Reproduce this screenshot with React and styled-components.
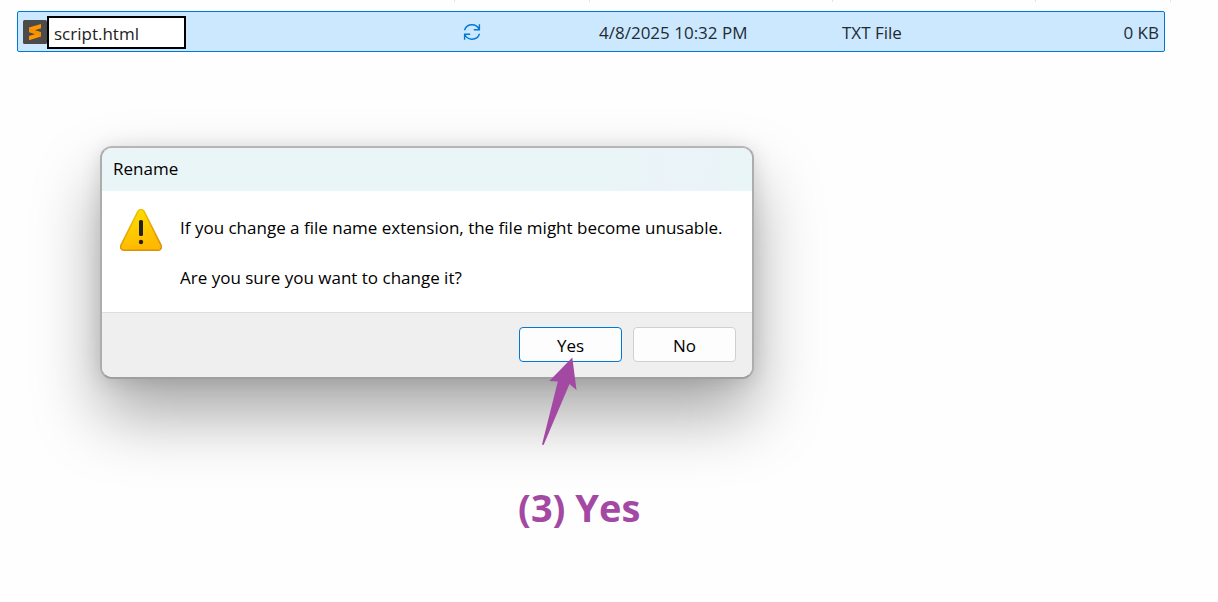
import React from "react";
import styled, { createGlobalStyle } from "styled-components";

const GlobalStyle = createGlobalStyle`
  * { box-sizing: border-box; }
  body {
    margin: 0;
    background: #fefefe;
    color: #000;
    font: 17px/24px "Open Sans", "Noto Sans", sans-serif;
  }
`;

const FileTable = styled.table`
  display: block;
  margin: 0 47px 0 17px;
  color: #222b33;

  thead, tbody { display: block; }
`;

const Columns = styled.tr`
  display: grid;
  grid-template-columns: minmax(200px, 1fr) 135px 243px 203px 135px;
`;

const HeaderRow = styled(Columns)`
  height: 2px;
  margin-bottom: 9px;
`;

const HeaderCell = styled.th`
  padding: 0;
  border-right: 1px solid #e3e3e3;
`;

const FileRow = styled(Columns)`
  grid-template-columns: minmax(200px, 1fr) 135px 243px 203px 130px;
  align-items: center;
  height: 41px;
  margin-right: 6px;
  border: 1px solid #0078d4;
  border-radius: 2px;
  background: #cce8ff;
`;

const Cell = styled.td`
  display: flex;
  align-items: center;
  justify-content: ${({ $end }) => ($end ? "flex-end" : "flex-start")};
  padding: 2px ${({ $end }) => ($end ? "5px" : "0")} 0 11px;
  white-space: nowrap;
`;

const NameCell = styled(Cell)`
  padding: 1px 0 0 5px;
`;

const StatusCell = styled(Cell)`
  padding: 0 0 0 10px;
`;

const NameInput = styled.input`
  width: 139px;
  height: 33px;
  padding: 2px 5px 0;
  border: 2px solid #000;
  outline: 0;
  background: #fff;
  color: #222;
  font: inherit;
`;

const Dialog = styled.section`
  width: 654px;
  max-width: calc(100% - 116px);
  margin: 94px 0 0 100px;
  overflow: hidden;
  border: 2px solid;
  border-color: #b6b6b6 #adadad #9f9f9f;
  border-radius: 12px;
  background: #fff;
  box-shadow: 0 36px 66px rgba(0, 0, 0, 0.34), 0 2px 20px rgba(0, 0, 0, 0.12);
`;

const DialogTitle = styled.h1`
  margin: 0;
  padding: 9px 11px 10px;
  background: linear-gradient(100deg, #eaf5f7 75%, #eaf4f9 90%, #eaf5f7);
  font-size: 17px;
  font-weight: 400;
`;

const DialogBody = styled.div`
  display: flex;
  gap: 18px;
  padding: 18px 18px 22px;

  > svg { flex: none; }
`;

const Message = styled.div`
  padding-top: 7px;

  p { margin: 0 0 26px; }
  p:last-child { margin: 0; }
`;

const DialogActions = styled.footer`
  display: flex;
  justify-content: flex-end;
  gap: 11px;
  padding: 14px 16px 15px;
  border-top: 1px solid #dfdfdf;
  background: #efefef;
`;

const Button = styled.button`
  width: 103px;
  height: 35px;
  padding: 2px 0 0;
  border: 1px solid ${({ $primary }) => ($primary ? "#0078d4" : "#d0d0d0")};
  border-radius: 4px;
  background: #fdfdfd;
  color: #000;
  font: inherit;
`;

const Annotation = styled.div`
  position: relative;
  margin: -22px 0 0 518px;
  color: #a349a4;
`;

const Arrow = styled.svg`
  display: block;
  margin-left: 23px;
`;

const Caption = styled.p`
  margin: 34px 0 0;
  font-size: 38px;
  font-weight: 700;
  line-height: 54px;
`;

const SublimeIcon = () => (
  <svg width="24" height="24" viewBox="0 0 24 24" aria-hidden="true">
    <rect width="24" height="24" rx="1.5" fill="#4b4b4b" />
    <path d="M6 7.6 18 4v4.2l-6.4 2 6.4 2v4.2L6 20.2V16l6.6-2L6 12z" fill="#ff9800" />
    <path d="M6 7.8v4.1l12 4.4v-4.1l-6.4-2z" fill="#f79000" />
  </svg>
);

const SyncIcon = () => (
  <svg width="18" height="18" viewBox="0 0 18 18" fill="none" stroke="#0078d4" strokeWidth="1.4" role="img" aria-label="Sync pending">
    <path d="M1.5 7.2C2.6 3.8 5.4 1.8 9 1.8c3.2 0 5.8 1.7 7.3 4.7M16.4 1.2v5.5h-5.6" />
    <path d="M16.5 10.8c-1.1 3.4-3.9 5.4-7.5 5.4-3.2 0-5.8-1.7-7.3-4.7M1.6 16.8v-5.5h5.6" />
  </svg>
);

const WarningIcon = () => (
  <svg width="42" height="42" viewBox="0 0 42 42" role="img" aria-label="Warning">
    <defs>
      <linearGradient id="warn-fill" x1="0" y1="0" x2="0.3" y2="1">
        <stop offset="0" stopColor="#ffe200" />
        <stop offset="1" stopColor="#ffb900" />
      </linearGradient>
      <linearGradient id="warn-edge" x1="0" y1="0" x2="0.3" y2="1">
        <stop offset="0" stopColor="#edca00" />
        <stop offset="1" stopColor="#dc8e0c" />
      </linearGradient>
    </defs>
    <path
      d="M17.9 2.4c1.4-2.4 4.8-2.4 6.2 0L41 36.2c1.2 2.4-.2 5-2.8 5H3.8c-2.6 0-4-2.6-2.8-5z"
      fill="url(#warn-fill)"
      stroke="url(#warn-edge)"
      strokeWidth="1.5"
    />
    <rect x="19" y="11" width="4" height="16" rx="1.5" fill="#222" />
    <circle cx="21" cy="33" r="2.2" fill="#222" />
  </svg>
);

export default function App() {
  return (
    <>
      <GlobalStyle />
      <FileTable>
        <thead>
          <HeaderRow>
            <HeaderCell aria-label="Name" />
            <HeaderCell aria-label="Status" />
            <HeaderCell aria-label="Date modified" />
            <HeaderCell aria-label="Type" />
            <HeaderCell aria-label="Size" />
          </HeaderRow>
        </thead>
        <tbody>
          <FileRow>
            <NameCell>
              <SublimeIcon />
              <NameInput type="text" aria-label="File name" defaultValue="script.html" />
            </NameCell>
            <StatusCell><SyncIcon /></StatusCell>
            <Cell>4/8/2025 10:32 PM</Cell>
            <Cell>TXT File</Cell>
            <Cell $end>0 KB</Cell>
          </FileRow>
        </tbody>
      </FileTable>

      <Dialog role="dialog" aria-labelledby="rename-title">
        <DialogTitle id="rename-title">Rename</DialogTitle>
        <DialogBody>
          <WarningIcon />
          <Message>
            <p>If you change a file name extension, the file might become unusable.</p>
            <p>Are you sure you want to change it?</p>
          </Message>
        </DialogBody>
        <DialogActions>
          <Button type="button" $primary>Yes</Button>
          <Button type="button">No</Button>
        </DialogActions>
      </Dialog>

      <Annotation>
        <Arrow width="36" height="89" viewBox="0 0 36 89" aria-hidden="true">
          <path d="M31.3.5 35.5 33 28.5 27 2.6 88 1 87.5 16.8 24.4 8.3 24z" fill="currentColor" />
        </Arrow>
        <Caption>(3) Yes</Caption>
      </Annotation>
    </>
  );
}
